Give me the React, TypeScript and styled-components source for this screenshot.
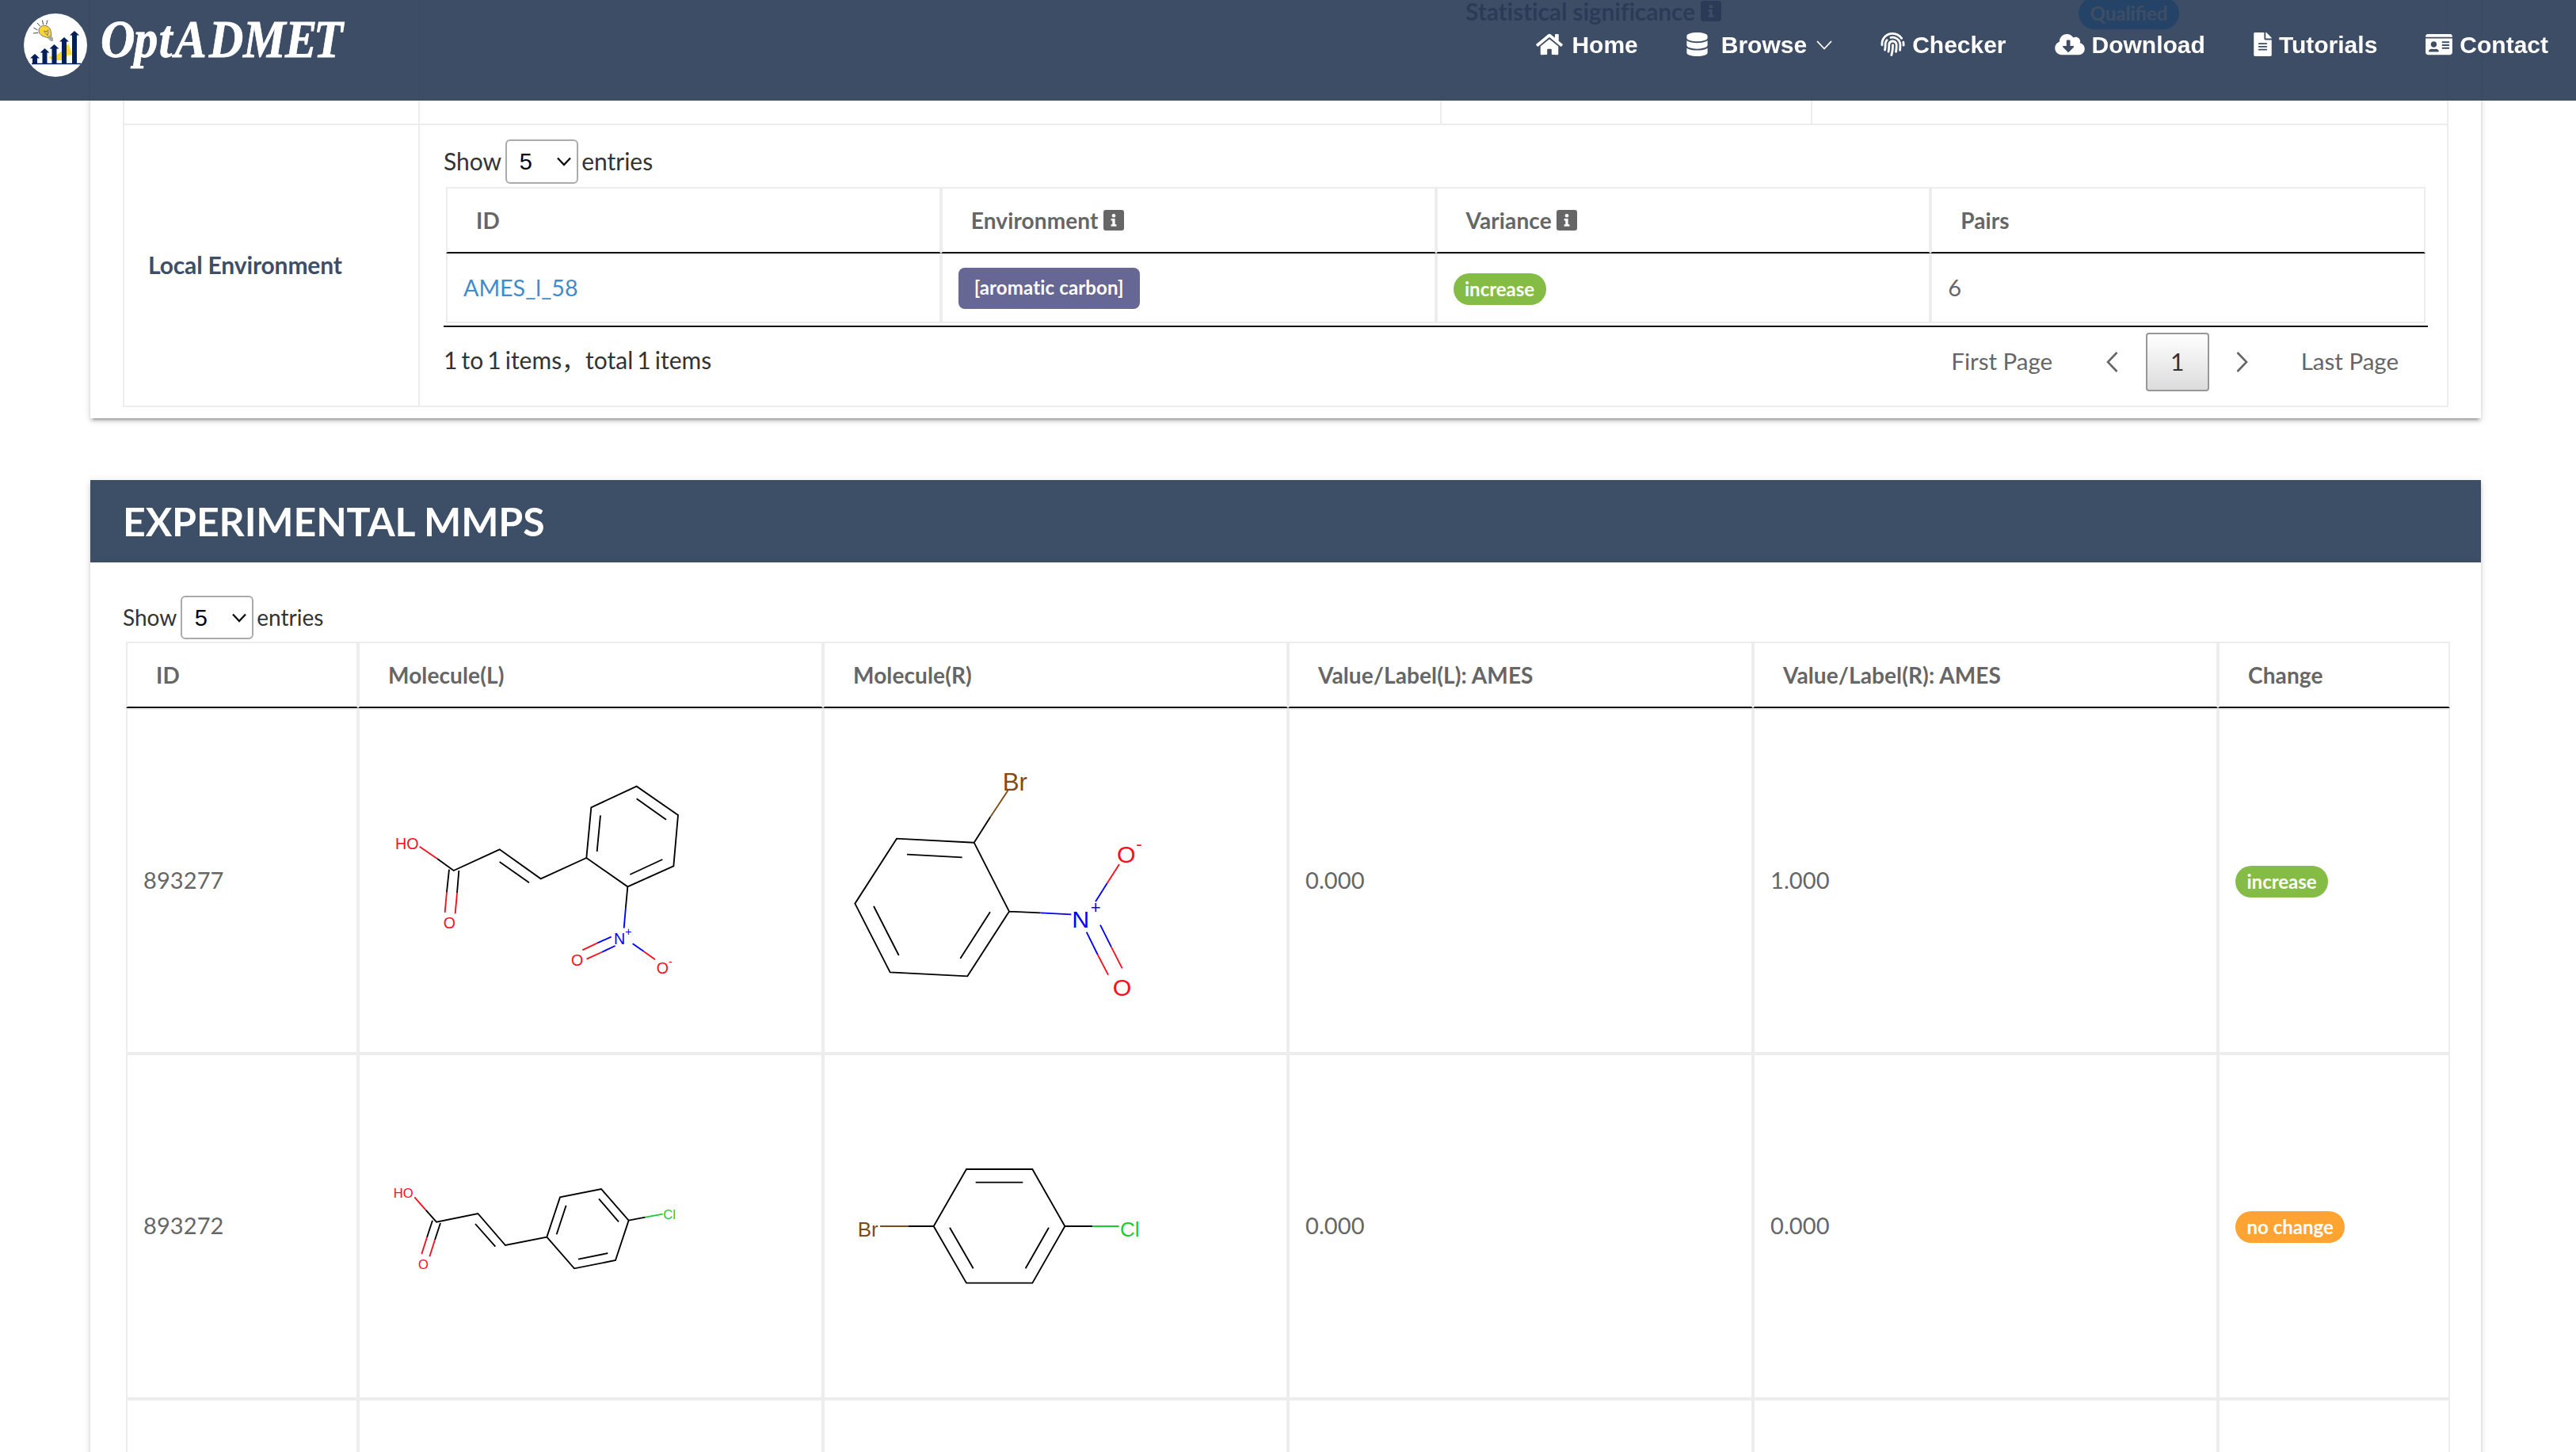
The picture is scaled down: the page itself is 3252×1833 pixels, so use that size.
import React from "react";
import styled, { createGlobalStyle, css } from "styled-components";
import {
  FaHome,
  FaDatabase,
  FaFingerprint,
  FaCloudDownloadAlt,
  FaFileAlt,
  FaIdCard,
} from "react-icons/fa";

const lato = `Lato, "Noto Sans CJK SC", sans-serif`;
const arial = `"Liberation Sans", Arial, sans-serif`;
const navy = "#3d4e67";
const line = "#ededed";

const GlobalStyle = createGlobalStyle`
  * { box-sizing: border-box; }
  body {
    margin: 0;
    background: #fff;
    color: #333;
    font-family: ${lato};
    font-size: 28px;
    line-height: 40px;
  }
`;

const Page = styled.div`
  width: 3252px;
  height: 1833px;
  overflow: hidden;
`;

/* ---------- top navigation ---------- */

const TopBar = styled.header`
  position: fixed;
  inset: 0 0 auto 0;
  z-index: 10;
  height: 127px;
  display: flex;
  justify-content: space-between;
  padding: 0 35px 0 30px;
  background: rgba(41, 58, 85, 0.9);
`;

const Brand = styled.a`
  display: flex;
  align-items: flex-start;
  padding-top: 17px;
  gap: 17px;
`;

const BrandMark = styled.svg`
  width: 80px;
  height: 80px;
`;

const BrandName = styled.svg`
  width: 330px;
  height: 80px;
  overflow: visible;
  fill: #fff;
  stroke: #fff;
  stroke-width: 0.8;
  font-family: "Liberation Serif", serif;
  font-size: 67px;
  font-weight: 700;
  font-style: italic;
`;

const Nav = styled.nav`
  display: flex;
  align-items: center;
  height: 114px;
  gap: 61px;
`;

const NavItem = styled.a<{ $gap: number }>`
  display: flex;
  align-items: center;
  gap: ${(p) => p.$gap}px;
  color: #fff;
  font: 700 30px/36px ${arial};
  white-space: nowrap;
`;

const NavIcon = styled.span<{ $w: number }>`
  display: flex;
  width: ${(p) => p.$w}px;
  padding-bottom: 2px;
  svg {
    width: ${(p) => p.$w}px;
    height: 30px;
    flex: none;
  }
`;

const Caret = styled.svg`
  width: 20px;
  height: 12px;
  margin-left: -5px;
`;

/* ---------- cards ---------- */

const Main = styled.main`
  margin: -40px 0 0 114px;
  width: 3018px;
`;

const Card = styled.section`
  background: #fff;
  box-shadow:
    0 4px 4px 0 rgba(0, 0, 0, 0.14),
    0 6px 2px -4px rgba(0, 0, 0, 0.2),
    0 2px 10px 0 rgba(0, 0, 0, 0.12);
`;

const SummaryCard = styled(Card)`
  padding: 0 41px 14px;
`;

const DataCard = styled(Card)`
  margin-top: 78px;
  height: 1400px;
`;

const CardTitle = styled.h2`
  margin: 0;
  height: 104px;
  padding-left: 41px;
  background: ${navy};
  color: #fff;
  font-size: 50px;
  font-weight: 700;
  letter-spacing: -0.1px;
  line-height: 104px;
`;

const DataBody = styled.div`
  padding: 42px 37px 0 41px;
`;

/* ---------- summary grid ---------- */

const Summary = styled.div`
  border: 2px solid ${line};
  font-size: 30px;
`;

const SummaryRow = styled.div<{ $cols: string; $height: number }>`
  display: grid;
  grid-template-columns: ${(p) => p.$cols};
  height: ${(p) => p.$height}px;
  & + & {
    border-top: 2px solid ${line};
  }
`;

const SummaryCell = styled.div<{ $center?: boolean }>`
  display: flex;
  align-items: ${(p) => (p.$center ? "center" : "flex-start")};
  & + & {
    border-left: 2px solid ${line};
  }
`;

const LabelText = styled.strong`
  display: flex;
  align-items: center;
  gap: 7px;
  padding: 0 0 3px 30px;
  color: ${navy};
  font-weight: 700;
  letter-spacing: -0.15px;
`;

const StatLabel = styled(LabelText)`
  padding-top: 32px;
`;

const StatValue = styled.div`
  padding: 31px 0 0 336px;
`;

const TableWrap = styled.div`
  padding: 18px 0 0 30px;
  width: 2535px;
`;

/* ---------- data tables ---------- */

const LengthBar = styled.label<{ $height: number }>`
  display: flex;
  align-items: center;
  gap: 4.5px;
  height: ${(p) => p.$height}px;
`;

const LengthText = styled.span`
  padding-bottom: 2px;
`;

const SelectBox = styled.span`
  display: flex;
  align-items: center;
  justify-content: space-between;
  width: 92px;
  height: 100%;
  padding: 0 7px 0 16px;
  border: 2px solid #aaa;
  border-radius: 6px;
  color: #000;
  font: 400 29px/36px ${arial};
`;

const SelectArrow = styled.svg`
  width: 18px;
  height: 12px;
`;

const Grid = styled.table<{ $width: number; $top: number; $left: number }>`
  width: ${(p) => p.$width}px;
  margin: ${(p) => p.$top}px 0 0 ${(p) => p.$left}px;
  table-layout: fixed;
  border-collapse: separate;
  border-spacing: 0;
  color: #666;
`;

const Col = styled.col<{ $width: number }>`
  width: ${(p) => p.$width}px;
`;

const Th = styled.th`
  height: 84px;
  padding: 0 36px;
  border: 2px solid ${line};
  border-bottom-color: #111;
  text-align: left;
  font-size: 28px;
  font-weight: 700;
  letter-spacing: 0.12px;
`;

const ThInner = styled.span`
  display: flex;
  align-items: center;
  gap: 6px;
`;

const Td = styled.td<{ $height: number }>`
  height: ${(p) => p.$height}px;
  padding: 0 20px 2px;
  border: 2px solid ${line};
  font-size: 29px;
  letter-spacing: 0.1px;
  vertical-align: middle;
`;

const RecordLink = styled.a`
  color: #428bca;
  font-size: 28.7px;
  letter-spacing: 0;
`;

const pill = css`
  display: block;
  width: max-content;
  color: #fff;
  font-size: 24px;
  font-weight: 700;
  white-space: nowrap;
`;

const Badge = styled.span<{ $bg: string }>`
  ${pill}
  height: 40px;
  margin-top: 4px;
  padding: 0 14.5px;
  border-radius: 20px;
  background: ${(p) => p.$bg};
  letter-spacing: 0;
  line-height: 40px;
`;

const Tag = styled.span`
  ${pill}
  height: 52px;
  margin-top: 2px;
  padding: 0 20px;
  border-radius: 8px;
  background: #676795;
  letter-spacing: 0.15px;
  line-height: 50px;
`;

const Info = styled.svg`
  width: 26px;
  height: 26px;
  flex: none;
`;

const Footer = styled.div`
  display: flex;
  justify-content: space-between;
  margin-top: 3px;
  border-top: 2px solid #111;
  padding-top: 7px;
`;

const FooterInfo = styled.div`
  padding-top: 14px;
  word-spacing: -2.6px;
`;

const Pager = styled.div`
  display: flex;
  align-items: center;
  height: 74px;
  color: #666;
`;

const PageText = styled.a`
  padding: 0 37px 2px 32px;
  font-size: 29.5px;
  & + svg {
    margin-left: 31px;
  }
`;

const PageArrow = styled.svg`
  width: 15px;
  height: 26px;
  margin: 0 34.5px;
`;

const PageNumber = styled.a`
  width: 80px;
  height: 74px;
  border: 2px solid #979797;
  border-radius: 4px;
  background: linear-gradient(to bottom, #fff 0%, #dcdcdc 100%);
  color: #333;
  line-height: 68px;
  text-align: center;
`;

const MolSvg = styled.svg`
  display: block;
  width: 400px;
  height: 400px;
  margin-top: 2px;
  fill: none;
  stroke-width: 5.6;
  text {
    font-family: ${arial};
    letter-spacing: 0;
    stroke: none;
  }
`;

/* ---------- pieces ---------- */

function InfoIcon() {
  return (
    <Info viewBox="0 0 26 26">
      <rect width="26" height="26" rx="3" fill="currentColor" />
      <circle cx="13" cy="7.2" r="2.3" fill="#fff" />
      <path d="M9.6 11h5v7.2h1.8v2.5H9.6v-2.5h1.7v-4.7H9.6z" fill="#fff" />
    </Info>
  );
}

function Length({ height }: { height: number }) {
  return (
    <LengthBar $height={height}>
      <LengthText>Show</LengthText>
      <SelectBox>
        5
        <SelectArrow viewBox="0 0 18 12">
          <path d="M1 1.5 9 10 17 1.5" fill="none" stroke="#111" strokeWidth="2.4" />
        </SelectArrow>
      </SelectBox>
      <LengthText>entries</LengthText>
    </LengthBar>
  );
}

function Logo() {
  const bars = [
    [12, 62],
    [24.5, 55],
    [36.5, 50],
    [49, 41],
    [62, 33],
  ];
  return (
    <Brand>
      <BrandMark viewBox="0 0 80 80">
        <circle cx="40" cy="40" r="40" fill="#fff" />
        <path d="M31 55c12-2 18-7 25-17l2 5 3 9-6 1-3 6H36z" fill="#fcd836" />
        {bars.map(([x, y]) => (
          <path
            key={x}
            fill="#00205b"
            d={`M${x + 2} ${y - 11}l6 5.500h-3V64h-6V${y - 5.5}h-3z`}
          />
        ))}
        <path d="M10 63.500h62" stroke="#00205b" strokeWidth="1.500" />
        <path
          d="M19 22c0-5 5-8 9-6.500 6 2 6 6 7 12l-5 3c-4-1-11-3-11-8.500z"
          fill="#f8d43a"
          stroke="#77735f"
          strokeWidth="1"
        />
        <path d="M25 22l5 1 1-3M26 23l4 5 1-5" fill="none" stroke="#77735f" strokeWidth=".9" />
        <path d="M30 31l5-3 2 3v4h-3z" fill="#a8a8a8" />
        <path
          d="M12 25l6-.500M12.500 18l5 3M17 12l3.500 4M23.500 8.500l1 5.500M30 8.500l-1.500 5.500"
          stroke="#444"
          strokeWidth="1"
        />
      </BrandMark>
      <BrandName viewBox="0 0 330 80">
        <text transform="scale(.9 1)" x="0 47 82 104 152 200 259 299" y="55">
          OptADMET
        </text>
      </BrandName>
    </Brand>
  );
}

const red = "#ff0d1a";
const blue = "#0000ff";
const brown = "#7f4c19";
const green = "#19cc33";

function NitroCinnamicAcid() {
  return (
    <MolSvg viewBox="42 -84 1200 1200">
      <path
        stroke="#000"
        d="M276 432 338 477 512 397 668 508 841 429 997 538 1171 460 1188 267 1031 158 859 238 841 429M512 444 624 523M894 268 881 405M1031 205 1143 284M1129 435 1006 492M321 473 312 558M358 477 351 562M997 538 990 615"
      />
      <path
        stroke={red}
        d="M209 386 276 432M312 558 305 636M351 562 344 640M883 751 826 778M899 786 842 812M1058 783 1101 814"
      />
      <path stroke={blue} d="M990 615 983 695M935 728 883 751M950 762 899 786M1016 754 1058 783" />
      <g fontSize="59" fill={red}>
        <text x="117" y="396">HO</text>
        <text x="299" y="695">O</text>
        <text x="783" y="836">O</text>
        <text x="1106" y="866">O</text>
        <text x="1152" y="838" fontSize="44">-</text>
      </g>
      <g fontSize="59" fill={blue}>
        <text x="945" y="755">N</text>
        <text x="988" y="723" fontSize="42">+</text>
      </g>
    </MolSvg>
  );
}

function BromoNitrobenzene() {
  return (
    <MolSvg viewBox="63 -84 1200 1200">
      <path
        stroke="#000"
        d="M631 274 569 371 276 356 118 602 251 862 544 877 702 632 569 371M524 427 315 416M189 612 284 798M630 634 517 810M702 632 820 637"
      />
      <path stroke={brown} d="M697 174 631 274" />
      <path stroke={blue} d="M820 637 937 643M1029 595 1073 525M995 710 1037 795M1047 683 1089 767" />
      <path stroke={red} d="M1073 525 1119 453M1037 795 1077 872M1089 767 1130 847" />
      <text x="677" y="173" fontSize="94" fill={brown}>Br</text>
      <g fontSize="91" fill={blue}>
        <text x="940" y="694">N</text>
        <text x="1010" y="640" fontSize="66">+</text>
      </g>
      <g fontSize="91" fill={red}>
        <text x="1110" y="448">O</text>
        <text x="1183" y="400" fontSize="68">-</text>
        <text x="1094" y="952">O</text>
      </g>
    </MolSvg>
  );
}

function ChloroCinnamicAcid() {
  return (
    <MolSvg viewBox="42 -276 1200 1200">
      <path
        stroke="#000"
        d="M233 263 273 308 430 276 534 396 691 365 741 214 897 183 1001 302 951 453 795 484 691 365M420 315 496 401M764 245 728 355M888 220 963 307M922 426 810 449M258 302 237 366M288 312 267 376M1001 302 1064 290"
      />
      <path stroke={red} d="M190 214 233 263M237 366 217 429M267 376 247 439" />
      <path stroke={green} d="M1064 290 1130 278" />
      <g fontSize="50" fill={red}>
        <text x="110" y="216">HO</text>
        <text x="204" y="485">O</text>
      </g>
      <text x="1132" y="297" fontSize="50" fill={green}>Cl</text>
    </MolSvg>
  );
}

function BromoChlorobenzene() {
  return (
    <MolSvg viewBox="63 -276 1200 1200">
      <path
        stroke="#000"
        d="M319 324H416L540 108H790L913 324 790 539H540L416 324M575 158H754M477 329 566 484M852 329 764 484M913 324H1017"
      />
      <path stroke={brown} d="M213 324H319" />
      <path stroke={green} d="M1017 324H1118" />
      <text x="128" y="363" fontSize="78" fill={brown}>Br</text>
      <text x="1122" y="363" fontSize="78" fill={green}>Cl</text>
    </MolSvg>
  );
}

const mmpColumns: [string, number][] = [
  ["ID", 293],
  ["Molecule(L)", 587],
  ["Molecule(R)", 587],
  ["Value/Label(L): AMES", 587],
  ["Value/Label(R): AMES", 587],
  ["Change", 293],
];

const mmpRows = [
  {
    id: "893277",
    left: <NitroCinnamicAcid />,
    right: <BromoNitrobenzene />,
    valueL: "0.000",
    valueR: "1.000",
    change: <Badge $bg="#85bc46">increase</Badge>,
  },
  {
    id: "893272",
    left: <ChloroCinnamicAcid />,
    right: <BromoChlorobenzene />,
    valueL: "0.000",
    valueR: "0.000",
    change: <Badge $bg="#ffa332">no change</Badge>,
  },
  { id: "", left: null, right: null, valueL: "", valueR: "", change: null },
];

function EnvironmentTable() {
  return (
    <TableWrap>
      <Length height={56} />
      <Grid $width={2499} $top={4} $left={3}>
        <thead>
          <tr>
            <Th>ID</Th>
            <Th>
              <ThInner>
                Environment
                <InfoIcon />
              </ThInner>
            </Th>
            <Th>
              <ThInner>
                Variance
                <InfoIcon />
              </ThInner>
            </Th>
            <Th>Pairs</Th>
          </tr>
        </thead>
        <tbody>
          <tr>
            <Td $height={88}>
              <RecordLink>AMES_l_58</RecordLink>
            </Td>
            <Td $height={88}>
              <Tag>[aromatic carbon]</Tag>
            </Td>
            <Td $height={88}>
              <Badge $bg="#85bc46">increase</Badge>
            </Td>
            <Td $height={88}>6</Td>
          </tr>
        </tbody>
      </Grid>
      <Footer>
        <FooterInfo>1 to 1 items，total 1 items</FooterInfo>
        <Pager>
          <PageText>First Page</PageText>
          <PageArrow viewBox="0 0 15 26">
            <path d="M13.500 1 2 13l11.500 12" fill="none" stroke="#666" strokeWidth="2.600" />
          </PageArrow>
          <PageNumber>1</PageNumber>
          <PageArrow viewBox="0 0 15 26">
            <path d="M1.500 1 13 13 1.500 25" fill="none" stroke="#666" strokeWidth="2.600" />
          </PageArrow>
          <PageText>Last Page</PageText>
        </Pager>
      </Footer>
    </TableWrap>
  );
}

export default function App() {
  return (
    <Page>
      <GlobalStyle />
      <TopBar>
        <Logo />
        <Nav>
          <NavItem $gap={11}>
            <NavIcon $w={34}><FaHome /></NavIcon>
            Home
          </NavItem>
          <NavItem $gap={17}>
            <NavIcon $w={27}><FaDatabase /></NavIcon>
            Browse
            <Caret viewBox="0 0 20 12">
              <path d="M1 1l9 9.500L19 1" fill="none" stroke="#fff" strokeWidth="1.800" />
            </Caret>
          </NavItem>
          <NavItem $gap={9}>
            <NavIcon $w={31}><FaFingerprint /></NavIcon>
            Checker
          </NavItem>
          <NavItem $gap={9}>
            <NavIcon $w={38}><FaCloudDownloadAlt /></NavIcon>
            Download
          </NavItem>
          <NavItem $gap={9}>
            <NavIcon $w={23}><FaFileAlt /></NavIcon>
            Tutorials
          </NavItem>
          <NavItem $gap={9}>
            <NavIcon $w={34}><FaIdCard /></NavIcon>
            Contact
          </NavItem>
        </Nav>
      </TopBar>

      <Main>
        <SummaryCard>
          <Summary>
            <SummaryRow $cols="371px 1290px 468px 1fr" $height={194}>
              <SummaryCell />
              <SummaryCell />
              <SummaryCell>
                <StatLabel>
                  Statistical significance
                  <InfoIcon />
                </StatLabel>
              </SummaryCell>
              <SummaryCell>
                <StatValue>
                  <Badge $bg="#0098ff">Qualified</Badge>
                </StatValue>
              </SummaryCell>
            </SummaryRow>
            <SummaryRow $cols="371px 1fr" $height={356}>
              <SummaryCell $center>
                <LabelText>Local Environment</LabelText>
              </SummaryCell>
              <SummaryCell>
                <EnvironmentTable />
              </SummaryCell>
            </SummaryRow>
          </Summary>
        </SummaryCard>

        <DataCard>
          <CardTitle>EXPERIMENTAL MMPS</CardTitle>
          <DataBody>
            <Length height={55} />
            <Grid $width={2934} $top={3} $left={4}>
              <colgroup>
                {mmpColumns.map(([name, width]) => (
                  <Col key={name} $width={width} />
                ))}
              </colgroup>
              <thead>
                <tr>
                  {mmpColumns.map(([name]) => (
                    <Th key={name}>{name}</Th>
                  ))}
                </tr>
              </thead>
              <tbody>
                {mmpRows.map((row, i) => (
                  <tr key={i}>
                    <Td $height={436}>{row.id}</Td>
                    <Td $height={436}>{row.left}</Td>
                    <Td $height={436}>{row.right}</Td>
                    <Td $height={436}>{row.valueL}</Td>
                    <Td $height={436}>{row.valueR}</Td>
                    <Td $height={436}>{row.change}</Td>
                  </tr>
                ))}
              </tbody>
            </Grid>
          </DataBody>
        </DataCard>
      </Main>
    </Page>
  );
}
